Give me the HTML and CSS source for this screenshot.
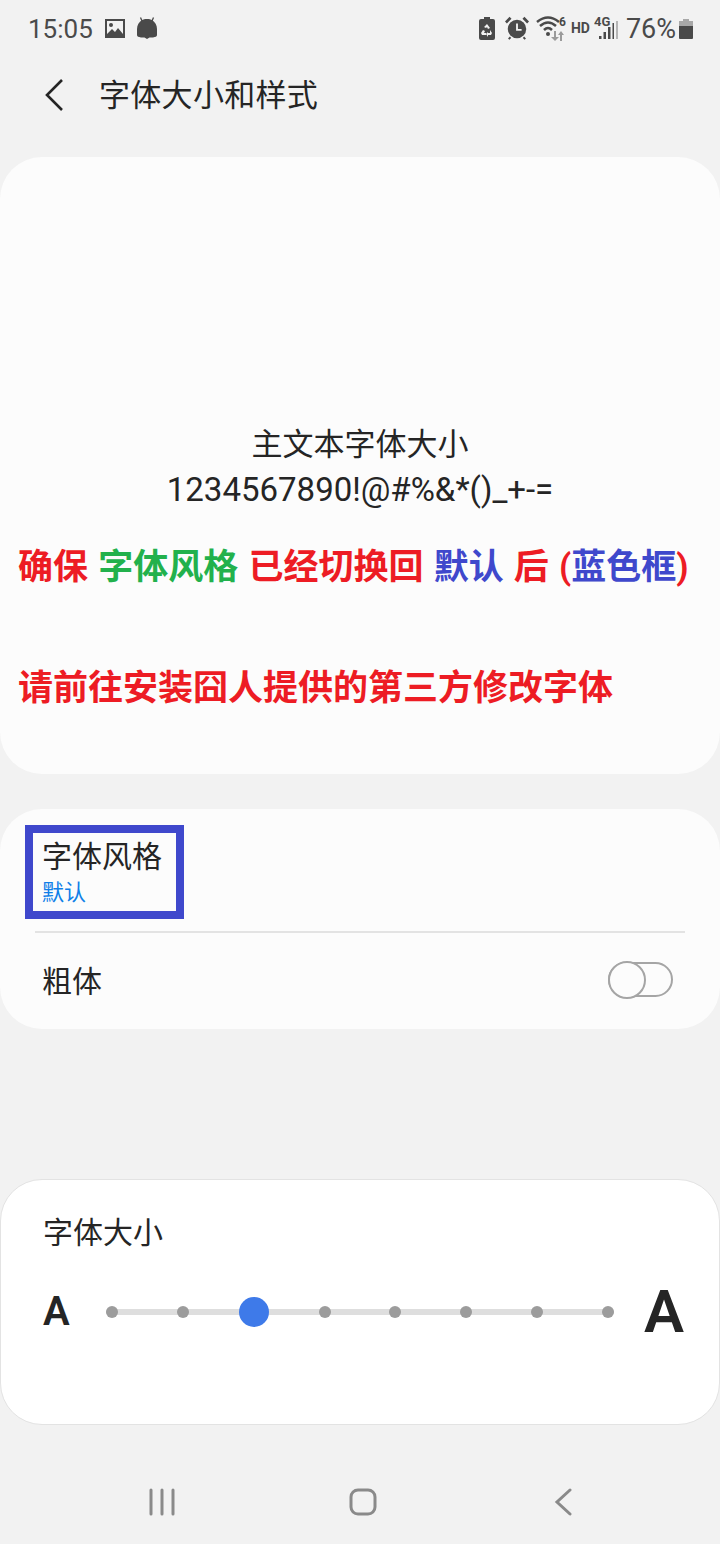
FILE: index.html
```html
<!DOCTYPE html>
<html lang="zh-CN">
  <head>
    <meta charset="utf-8">
    <title>字体大小和样式</title>
    <link rel="stylesheet" href="styles.css">
  </head>
  <body>
    <div class="status">
      <div class="status-left">
        <span class="clock">15:05</span>
        <svg class="ic" width="22" height="22" viewBox="0 0 22 22"><path fill="#4a4a4a" fill-rule="evenodd" d="M1 2h20v19H1zM3 4v13l5-5 3 3 3-4 5 6V4z"/><circle cx="7" cy="8" r="2" fill="#4a4a4a"/></svg>
        <svg class="ic" width="22" height="26" viewBox="0 0 22 26"><path fill="#4a4a4a" d="M6 5C8 3.500 14 3.500 16 5 19 7 21 10 21 14V20C21 21.500 19.500 22 17 22.500H13.500L11 24 8.500 22.500H5C2.500 22 1 21.500 1 20V14C1 10 3 7 6 5z"/><path d="M6 6L4.500 2.500M16 6L17.500 2.500" stroke="#4a4a4a" stroke-width="1.300"/></svg>
      </div>
      <div class="status-right">
        <svg class="ic-recycle" width="16" height="24" viewBox="0 0 16 24"><path fill="#4a4a4a" d="M5 1h6v2h3q2 0 2 2v17q0 2-2 2H2q-2 0-2-2V5q0-2 2-2h3z"/><path fill="#f2f2f2" d="M8 8l3 4-2 1-1-2-1 1-2-1zM11 14l2 3-1 2H9v2l-2-3 2-2v1h2zM4 14l2 1-1 2h2v2H3l-1-2z"/></svg>
        <svg class="ic-alarm" width="24" height="24" viewBox="0 0 26 26"><circle cx="13" cy="14" r="10" fill="#4a4a4a"/><path d="M13 8v7h5" fill="none" stroke="#f2f2f2" stroke-width="2"/><path d="M1 7l5-5M25 7l-5-5" stroke="#4a4a4a" stroke-width="3"/><path d="M6 23l-2 2M20 23l2 2" stroke="#4a4a4a" stroke-width="2"/></svg>
        <svg class="ic-wifi" width="30" height="26" viewBox="0 0 30 26"><g fill="none" stroke="#4a4a4a" stroke-width="2.500"><path d="M1 7q11-9 22 0"/><path d="M4 11q8-7 16 0"/><path d="M8 15q4-4 8 0"/></g><circle cx="12" cy="19" r="2" fill="#4a4a4a"/><path d="M18 16h2v6h3l-4 4-4-4h3z" fill="#9a9a9a"/><path d="M24 26v-6h-2l3-4 3 4h-2v6z" fill="#9a9a9a"/><text x="23" y="11" class="tiny">6</text></svg>
        <span class="hd">HD</span>
        <svg class="ic-signal" width="24" height="26" viewBox="0 0 24 26"><text x="0" y="11" class="tiny-4g">4G</text><path fill="#4a4a4a" d="M5 21h2.500v3H5zM9.500 17h2.500v7H9.500zM14 12h2.500v12H14zM18.500 8H20v16h-1.500z"/><path fill="#b5b5b5" d="M22 6h2v18h-2z"/></svg>
        <span class="batt-pct">76%</span>
        <svg width="16" height="24" viewBox="0 0 16 24"><path fill="#a8a8a8" d="M5 3h6v2h4v5H1V5h4z"/><path fill="#4a4a4a" d="M1 10h14v12q0 1-1 1H2q-1 0-1-1z"/></svg>
      </div>
    </div>

    <div class="title-bar">
      <svg width="22" height="34" viewBox="0 0 22 34"><path d="M18 2L3 17l15 15" fill="none" stroke="#252525" stroke-width="2.600"/></svg>
      <h1>字体大小和样式</h1>
    </div>

    <div class="card preview">
      <div class="sample">
        <div>主文本字体大小</div>
        <div class="sample-latin">1234567890!@#%&amp;*()_+-=</div>
      </div>
      <p class="note note-first">确保 <span class="green">字体风格</span> 已经切换回 <span class="blue">默认</span> 后 (<span class="blue">蓝色框</span>)</p>
      <p class="note">请前往安装囧人提供的第三方修改字体</p>
    </div>

    <div class="card options">
      <div class="row row-style">
        <div class="row-text">
          <div class="row-title">字体风格</div>
          <div class="row-sub">默认</div>
        </div>
        <div class="highlight"></div>
      </div>
      <div class="divider"></div>
      <div class="row row-bold">
        <div class="row-title">粗体</div>
        <div class="switch"><span class="knob"></span></div>
      </div>
    </div>

    <div class="card size">
      <div class="row-title">字体大小</div>
      <div class="slider-row">
        <span class="a-small">A</span>
        <div class="slider">
          <span class="dot"></span><span class="dot"></span><span class="dot on"></span><span class="dot"></span><span class="dot"></span><span class="dot"></span><span class="dot"></span><span class="dot"></span>
        </div>
        <span class="a-large">A</span>
      </div>
    </div>

    <div class="nav">
      <svg width="28" height="28" viewBox="0 0 28 28"><path d="M2 2v24M13 2v24M24 2v24" stroke="#8a8a8a" stroke-width="3" stroke-linecap="round"/></svg>
      <svg width="28" height="28" viewBox="0 0 28 28"><rect x="2" y="2" width="24" height="24" rx="7" fill="none" stroke="#8a8a8a" stroke-width="3"/></svg>
      <svg width="28" height="28" viewBox="0 0 28 28"><path d="M21 2L8 14l13 12" fill="none" stroke="#8a8a8a" stroke-width="3" stroke-linecap="round"/></svg>
    </div>
  </body>
</html>
```

FILE: styles.css
```css
* {box-sizing:border-box}
html,body {margin:0;padding:0}
body {width:720px;height:1544px;overflow:hidden;background:#f2f2f2;color:#252525;font-family:Roboto,"Noto Sans CJK SC",sans-serif}

.status {display:flex;justify-content:space-between;align-items:center;height:56px;padding:0 26px 0 28px;color:#4a4a4a}
.status-left {display:flex;align-items:center;gap:10px}
.status-right {display:flex;align-items:center;gap:6px}
.clock {font-size:26px;margin-right:1px;padding-top:2px}
.ic-recycle {margin-right:4px}
.ic-alarm {margin-right:1px}
.ic-wifi {margin-right:-1px}
.ic-signal {margin-left:-2px}
.batt-pct {font-size:27px;margin-left:2px;margin-right:-4px;padding-top:2px}
.hd {font:bold 14px Roboto,sans-serif}
.tiny {font:bold 12px Roboto,sans-serif;fill:#4a4a4a}
.tiny-4g {font:bold 13px Roboto,sans-serif;fill:#4a4a4a}

.title-bar {display:flex;align-items:center;gap:33px;height:78px;padding-left:44px}
.title-bar h1 {margin:-5px 0 0;font-size:31px;font-weight:400;letter-spacing:.3px}

.card {background:#fcfcfc;border-radius:42px}

.preview {height:617px;margin-top:23px;padding:265px 18px 0}
.sample {text-align:center;font-size:31px;line-height:45px}
.sample-latin {font-size:33px}
.note {margin:0;font-size:35px;font-weight:700;line-height:46px;color:#ed1c24;white-space:nowrap}
.note-first {margin-top:33px;margin-bottom:75px;word-spacing:1.500px}
.green {color:#22b14c}
.blue {color:#3f48cc}

.options {height:220px;margin-top:35px;padding:0 35px}
.row-title {font-size:30px;line-height:40px}
.row {display:flex;align-items:center;padding-left:7px}
.row-style {position:relative;height:122px;padding-top:4px}
.row-sub {font-size:22px;line-height:28px;color:#0f7fe8;margin-top:2px}
.highlight {position:absolute;left:-10px;top:16px;width:159px;height:94px;border:8px solid #3f48cc}
.divider {height:2px;background:#e3e3e3}
.row-bold {justify-content:space-between;height:96px}
.row-bold .row-title {margin-top:2px}
.switch {position:relative;width:65px;height:35px;border:2px solid #a5a5a5;border-radius:18px;margin:-3px 12px 0 0}
.knob {position:absolute;left:-2px;top:-3px;width:38px;height:38px;background:#fcfcfc;border:2px solid #a5a5a5;border-radius:50%}

.size {height:246px;margin-top:150px;padding:33px 35px 0 42px;background:#fff;border:1px solid #e3e3e3}
.slider-row {display:flex;align-items:center;margin-top:35px}
.a-small {font:600 40px/48px Roboto,sans-serif;width:63px}
.a-large {font:600 60px/48px Roboto,sans-serif;margin-left:auto}
.slider {display:flex;justify-content:space-between;align-items:center;width:508px;height:6px;background:#dedede;border-radius:3px}
.dot {width:12px;height:12px;border-radius:50%;background:#9c9c9c;flex:none}
.dot.on {width:30px;height:30px;background:#3e7ae9;margin:0 -9px}

.nav {display:flex;justify-content:space-between;align-items:center;height:40px;margin-top:57px;padding:0 143px 0 149px}
```
